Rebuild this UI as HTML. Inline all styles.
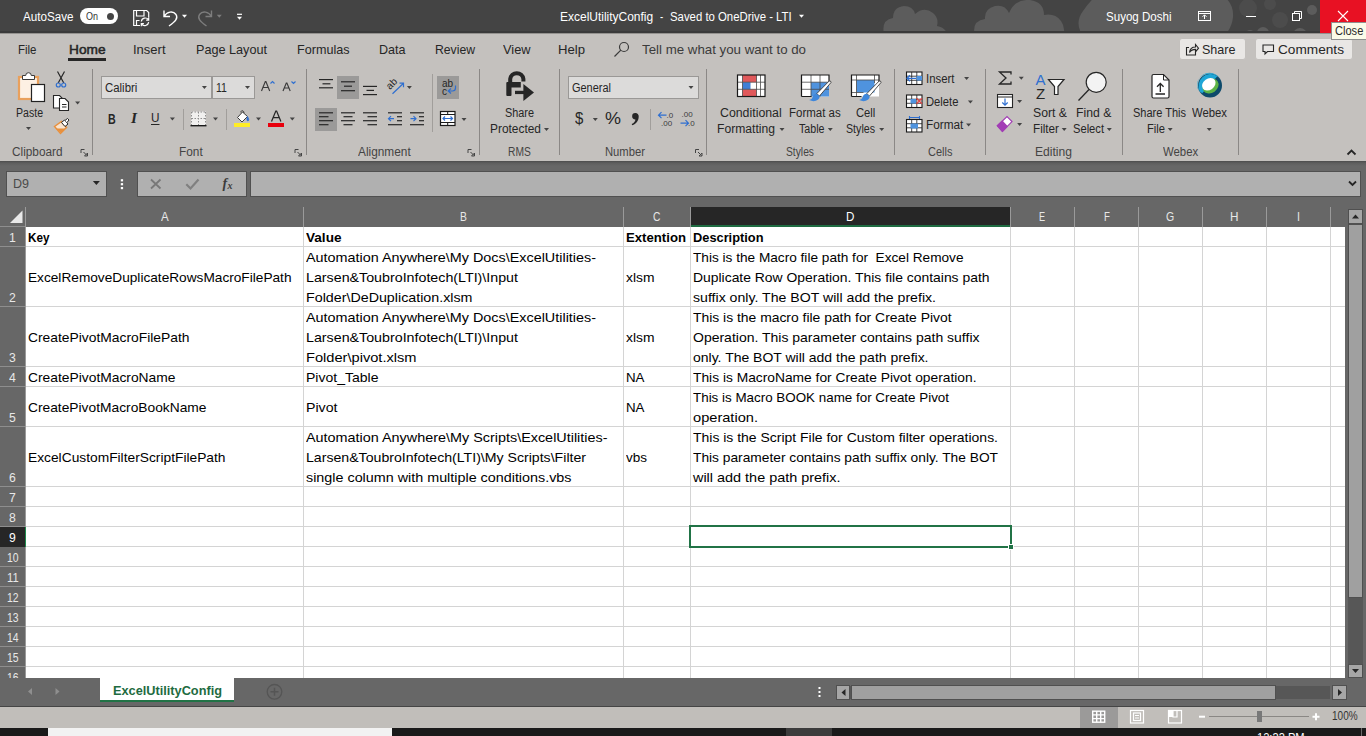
<!DOCTYPE html>
<html lang="en"><head><meta charset="utf-8"><title>ExcelUtilityConfig - Excel</title>
<style>

*{box-sizing:border-box;margin:0;padding:0}
html,body{width:1366px;height:736px;overflow:hidden;background:#c4c1be}
body{font-family:"Liberation Sans",sans-serif;font-size:12px;color:#262626}
#app{position:relative;width:1366px;height:736px;overflow:hidden;background:#c4c1be}
.b{position:absolute}
.t{z-index:3;position:absolute;white-space:pre;transform-origin:0 50%;display:block}
svg.ic{z-index:3;position:absolute;left:0;top:0;width:1366px;height:736px;overflow:hidden}
.titlebar{left:0;top:0;width:1366px;height:33px;background:#444444;border-bottom:2px solid #3a3a3a}
.tabrow{left:0;top:33px;width:1366px;height:33px;background:#c4c1be;border-top:1px solid #94928f}
.ribbon{left:0;top:66px;width:1366px;height:95px;background:#c4c1be}
.band{left:0;top:161px;width:1366px;height:46px;background:linear-gradient(#4c4c4c,#5e5e5e 2px,#676767 5px)}
.box{background:#b0b0b0;border:1px solid #505050}
.grid{left:0;top:207px;width:1345px;height:471px;background:#fff;overflow:hidden}
.gridwrap{left:0;top:207px;width:1366px;height:471px;background:#676767}
.colhdr{left:0;top:0;width:1345px;height:20px;background:#676767}
.rowhdr{left:0;top:20px;width:26px;height:451px;background:#676767;border-right:1px solid #9a9a9a}
.hl{position:absolute;left:26px;width:1320px;height:1px;background:#d4d4d4}
.vl{position:absolute;top:20px;width:1px;height:451px;background:#d4d4d4}
.rh{position:absolute;left:0;width:25px;height:1px;background:#8e8e8e}
.ch{position:absolute;top:0;width:1px;height:20px;background:#9a9a9a}
.sheetbar{left:0;top:678px;width:1366px;height:29px;background:#676767;border-bottom:1px solid #454545;z-index:2}
.status{left:0;top:707px;width:1366px;height:21px;background:#c1beba;z-index:2}
.taskbar{z-index:2;left:0;top:728px;width:1366px;height:8px;background:#1a1a1a;overflow:hidden}
.t.rn{z-index:1}
.t.sf{font-family:"Liberation Serif",serif}
.t.sb{-webkit-text-stroke:0.5px #262626}

</style></head>
<body>
<div id="app">
<div class="b titlebar"></div>
<div class="b" style="left:80px;top:8px;width:38px;height:16px;background:#fff;border-radius:8px"></div>
<div class="b" style="left:106.5px;top:12.5px;width:7px;height:7px;background:#444;border-radius:50%"></div>
<div class="b" style="left:1320px;top:0px;width:46px;height:33px;background:#e81123"></div>
<div class="b tabrow"></div>
<div class="b ribbon"></div>
<div class="b" style="left:68px;top:58px;width:38px;height:3px;background:#262626"></div>
<div class="b" style="left:1179px;top:38px;width:67px;height:22px;background:#e9e7e5;border:1px solid #c3c0bd;border-radius:3px"></div>
<div class="b" style="left:1255px;top:38px;width:98px;height:22px;background:#e9e7e5;border:1px solid #c3c0bd;border-radius:3px"></div>
<div class="b" style="left:1331px;top:22px;width:40px;height:18px;background:#fbfbe9;border:1px solid #8f8f8f"></div>
<div class="b" style="left:92px;top:69px;width:1px;height:86px;background:#8b8886"></div>
<div class="b" style="left:306px;top:69px;width:1px;height:86px;background:#8b8886"></div>
<div class="b" style="left:479px;top:69px;width:1px;height:86px;background:#8b8886"></div>
<div class="b" style="left:559px;top:69px;width:1px;height:86px;background:#8b8886"></div>
<div class="b" style="left:706px;top:69px;width:1px;height:86px;background:#8b8886"></div>
<div class="b" style="left:894px;top:69px;width:1px;height:86px;background:#8b8886"></div>
<div class="b" style="left:985px;top:69px;width:1px;height:86px;background:#8b8886"></div>
<div class="b" style="left:1122px;top:69px;width:1px;height:86px;background:#8b8886"></div>
<div class="b" style="left:1238px;top:69px;width:1px;height:86px;background:#8b8886"></div>
<div class="b" style="left:183px;top:109px;width:1px;height:21px;background:#a19e9b"></div>
<div class="b" style="left:226px;top:109px;width:1px;height:21px;background:#a19e9b"></div>
<div class="b" style="left:650px;top:109px;width:1px;height:21px;background:#a19e9b"></div>
<div class="b" style="left:432px;top:74px;width:1px;height:58px;background:#a19e9b"></div>
<div class="b" style="left:101px;top:76px;width:111px;height:23px;background:#dcdbda;border:1px solid #9a9896"></div>
<div class="b" style="left:212px;top:76px;width:43px;height:23px;background:#dcdbda;border:1px solid #9a9896"></div>
<div class="b" style="left:568px;top:76px;width:131px;height:23px;background:#dcdbda;border:1px solid #9a9896"></div>
<div class="b" style="left:337px;top:76px;width:22px;height:23px;background:#9b9a99"></div>
<div class="b" style="left:437px;top:76px;width:22px;height:23px;background:#9b9a99"></div>
<div class="b" style="left:315px;top:108px;width:22px;height:23px;background:#9b9a99"></div>
<div class="b" style="left:234px;top:123px;width:16px;height:4px;background:#ffed26"></div>
<div class="b" style="left:268px;top:123px;width:16px;height:4px;background:#e8000c"></div>
<div class="b band"></div>
<div class="b box" style="left:6px;top:171px;width:101px;height:26px;"></div>
<div class="b box" style="left:137px;top:171px;width:110px;height:26px;"></div>
<div class="b box" style="left:250px;top:171px;width:1111px;height:26px;"></div>
<div class="b gridwrap"></div><div class="b grid"><div class="b colhdr"></div><div class="b rowhdr"></div><div class="hl" style="top:39px"></div><div class="rh" style="top:39px"></div><div class="hl" style="top:99px"></div><div class="rh" style="top:99px"></div><div class="hl" style="top:159px"></div><div class="rh" style="top:159px"></div><div class="hl" style="top:179px"></div><div class="rh" style="top:179px"></div><div class="hl" style="top:219px"></div><div class="rh" style="top:219px"></div><div class="hl" style="top:279px"></div><div class="rh" style="top:279px"></div><div class="hl" style="top:299px"></div><div class="rh" style="top:299px"></div><div class="hl" style="top:319px"></div><div class="rh" style="top:319px"></div><div class="hl" style="top:339px"></div><div class="rh" style="top:339px"></div><div class="hl" style="top:359px"></div><div class="rh" style="top:359px"></div><div class="hl" style="top:379px"></div><div class="rh" style="top:379px"></div><div class="hl" style="top:399px"></div><div class="rh" style="top:399px"></div><div class="hl" style="top:419px"></div><div class="rh" style="top:419px"></div><div class="hl" style="top:439px"></div><div class="rh" style="top:439px"></div><div class="hl" style="top:459px"></div><div class="rh" style="top:459px"></div><div class="hl" style="top:479px"></div><div class="rh" style="top:479px"></div><div class="vl" style="left:303px"></div><div class="ch" style="left:303px"></div><div class="vl" style="left:623px"></div><div class="ch" style="left:623px"></div><div class="vl" style="left:690px"></div><div class="ch" style="left:690px"></div><div class="vl" style="left:1010px"></div><div class="ch" style="left:1010px"></div><div class="vl" style="left:1074px"></div><div class="ch" style="left:1074px"></div><div class="vl" style="left:1138px"></div><div class="ch" style="left:1138px"></div><div class="vl" style="left:1202px"></div><div class="ch" style="left:1202px"></div><div class="vl" style="left:1266px"></div><div class="ch" style="left:1266px"></div><div class="vl" style="left:1330px"></div><div class="ch" style="left:1330px"></div><div class="ch" style="left:25px"></div><div class="rh" style="top:19px"></div><div class="b" style="left:691px;top:0;width:319px;height:20px;background:#262626;border-bottom:2px solid #1e6b41"></div><div class="b" style="left:0;top:320px;width:26px;height:20px;background:#262626;border-right:1px solid #1e8a4c"></div><div class="b" style="left:689px;top:318px;width:323px;height:23px;border:2px solid #217346"></div><div class="b" style="left:1008px;top:337px;width:6px;height:6px;background:#217346;border:1px solid #fff"></div></div>
<div class="b" style="left:1348px;top:209px;width:15px;height:469px;background:#575757"></div>
<div class="b" style="left:1348px;top:209px;width:15px;height:15px;background:#a6a6a6;border:1px solid #505050"></div>
<div class="b" style="left:1348px;top:224px;width:15px;height:374px;background:#a0a0a0;border:1px solid #505050"></div>
<div class="b" style="left:1348px;top:664px;width:15px;height:14px;background:#a6a6a6;border:1px solid #505050"></div>
<div class="b sheetbar"></div>
<div class="b" style="left:100px;top:678px;width:134px;height:24px;background:#ffffff;border-bottom:2px solid #217346;z-index:2"></div>
<div class="b" style="left:836px;top:686px;width:494px;height:13px;background:#575757;z-index:2"></div>
<div class="b" style="left:836px;top:685px;width:14px;height:15px;background:#a6a6a6;border:1px solid #505050;z-index:2"></div>
<div class="b" style="left:851px;top:685px;width:425px;height:15px;background:#a0a0a0;border:1px solid #505050;z-index:2"></div>
<div class="b" style="left:1332px;top:685px;width:15px;height:15px;background:#a6a6a6;border:1px solid #505050;z-index:2"></div>
<div class="b status"></div>
<div class="b" style="left:1080px;top:707px;width:38px;height:21px;background:#9b9a99;z-index:2"></div>
<div class="b" style="left:1209px;top:716px;width:100px;height:1px;background:#8a8784;z-index:2"></div>
<div class="b" style="left:1257px;top:711px;width:5px;height:11px;background:#787878;z-index:2"></div>
<div class="b taskbar"><div class="b" style="left:48px;top:0;width:344px;height:9px;background:#f2f2f2"></div><div class="b" style="left:786px;top:0;width:46px;height:9px;background:#3c3c3c"></div></div>
<svg class="ic" width="1366" height="736" viewBox="0 0 1366 736">
<clipPath id="tb"><rect x="0" y="0" width="1366" height="31"/></clipPath>
<g clip-path="url(#tb)"><g fill="#5c5c5c"><path d="M884 34q-3-14 9-16q0-11 11-12q9 0 11 8q9-8 18-1q6 5 4 13q10 2 11 11v6h-64z"/><path d="M975 36q-4-15 10-17q-1-10 10-13q10-2 14 7q6-14 21-13q14 2 14 15q11-2 17 6q5 7 2 15z"/><path d="M1083 36q-9-13 0-25q6-9 14-16h125q12 8 11 22q-1 11-9 19z"/><circle cx="1263" cy="33" r="6"/><circle cx="1250" cy="34" r="4"/><circle cx="1300" cy="35" r="7"/><circle cx="1312" cy="10" r="5"/></g><g fill="#4c4c4c"><circle cx="1248" cy="8" r="9"/><circle cx="1280" cy="20" r="8"/><circle cx="1270" cy="4" r="6"/></g></g>
<g fill="none" stroke="#fff" stroke-width="1.2"><path d="M140 25.5h-6.3v-15h13l2 2v5"/><path d="M136.5 10.5v5.5h7.5v-5.5"/><path d="M136.5 25.5v-5h3"/><path d="M141.3 21.5a4 4 0 0 1 7.2-1.8M148.7 17.5v2.6h-2.6M148.7 22.2a4 4 0 0 1-7.2 1.8M141.3 26.2v-2.6h2.6"/></g>
<g fill="none" stroke-width="1.4"><path d="M164 10.5v6h6M164 16.5c3-5 9-6 12-2c2.5 4-1 7-7 11.500" stroke="#fff"/><path d="M211.500 10.5v6h-6M211.500 16.5c-3-5-9-6-12-2c-2.5 4 1 7 7 11.500" stroke="#7d7d7d"/></g>
<path d="M182.0 14.8h5.0l-2.5 3.0z" fill="#fff"/>
<path d="M216.8 14.8h5.0l-2.5 3.0z" fill="#7d7d7d"/>
<path d="M237 14.3h5" stroke="#fff" stroke-width="1.2"/>
<path d="M237.0 16.8h5.0l-2.5 3.0z" fill="#fff"/>
<path d="M799.0 14.8h5.0l-2.5 3.0z" fill="#fff"/>
<g fill="none" stroke="#fff" stroke-width="1"><rect x="1198.500" y="11.500" width="12" height="9"/><path d="M1198.500 13.500h12M1204.500 19v-4M1202.500 16.800l2-2l2 2"/></g>
<path d="M1246 16.500h10" stroke="#fff" stroke-width="1"/>
<g fill="none" stroke="#fff" stroke-width="1"><rect x="1292.500" y="13.500" width="7" height="7"/><path d="M1294.500 13.500v-2h7v7h-2"/></g>
<path d="M1338 11l10 10M1348 11l-10 10" stroke="#fff" stroke-width="1.1"/>
<g fill="none" stroke="#3b3b3b" stroke-width="1.2"><circle cx="624" cy="47" r="4.500"/><path d="M620.800 50.200L614.500 56.500"/></g>
<g fill="none" stroke="#262626" stroke-width="1.1"><path d="M1189 47.500h-2.500v7.500h9v-3"/><path d="M1189.500 52.500c0.500-4 3-5.500 6-5.500v-2.500l3 3.700l-3 3.700v-2.500c-3 0-4.500 0.800-6 3.100z"/></g>
<path d="M1263 45h10.500v6.500h-6l-2.500 2.500v-2.500h-2z" fill="none" stroke="#262626" stroke-width="1.1"/>
<rect x="19" y="77" width="19" height="22" fill="#fdf0e3" stroke="#e9a05c" stroke-width="2.200"/>
<path d="M22.500 79.500v-4h3.200a2.800 2.800 0 0 1 5.600 0h3.200v4z" fill="#fff" stroke="#3a3a3a" stroke-width="1"/>
<rect x="31.500" y="84.500" width="13" height="17" fill="#fff" stroke="#222" stroke-width="1.200"/>
<path d="M26.0 127.0h5.0l-2.5 3.0z" fill="#444"/>
<g fill="none" stroke-width="1.2"><path d="M57.500 71.500l6.300 11.500M64.500 71.500l-6.300 11.500" stroke="#262626"/><circle cx="58.300" cy="85" r="2" stroke="#2f6fd0"/><circle cx="63.700" cy="85" r="2" stroke="#2f6fd0"/></g>
<g fill="#fff" stroke="#262626" stroke-width="1.1"><path d="M53.500 95.500h6l2.500 2.500v10h-8.500z"/><path d="M59.500 98.500h5.500l3.500 3.500v8.500h-9z"/><path d="M62 104.500h4.500M62 107h4.500" fill="none"/></g>
<path d="M75.1 101.5h5.0l-2.5 3.0z" fill="#444"/>
<g stroke-width="1"><path d="M54.500 126.500l7-5l5 6l-6 6z" fill="#f9e4cf" stroke="#e8903d" stroke-width="1.5"/><path d="M56 128.500l5 4.500l4.500-4.500z" fill="#e8903d" stroke="none"/><path d="M61.500 122.500l3-2.500l3.500 4l-3 2.500z" fill="#fff" stroke="#262626"/><path d="M65 120.500l2.500-2l1.500 1.500l-2 2.500" fill="#fff" stroke="#262626"/></g>
<path d="M81 153.0v-3.5h3.5M83.5 152.0l3.5 3.5M87.5 153.0v3h-3z" fill="none" stroke="#444" stroke-width="1"/>
<path d="M201.9 86.0h5.0l-2.5 3.0z" fill="#444"/>
<path d="M245.0 86.0h5.0l-2.5 3.0z" fill="#444"/>
<g fill="none" stroke="#3b3b3b" stroke-width="1.150"><path d="M261.500 91l3.800-9.500h0.600l3.800 9.500M263 87.500h5.200"/><path d="M283 91l3.300-8h0.600l3.300 8M284.300 88h4.500"/></g>
<g fill="none" stroke="#2f6fd0" stroke-width="1.1"><path d="M270.500 83.500l2-2l2 2"/><path d="M291.500 81.500l2 2l2-2"/></g>
<path d="M151 124.500h8.500" stroke="#262626" stroke-width="1"/>
<path d="M169.9 117.5h5.0l-2.5 3.0z" fill="#444"/>
<g><rect x="191" y="111.500" width="15" height="14" fill="#f1f0ef"/><path d="M191.500 112v13M205.500 112v13M191.500 112h14M198.500 112v13M191.500 118.500h14" fill="none" stroke="#8e8e8e" stroke-width="1" stroke-dasharray="1.5 1.5"/><path d="M190.500 125.700h16" stroke="#1a1a1a" stroke-width="1.400"/></g>
<path d="M213.0 117.5h5.0l-2.5 3.0z" fill="#444"/>
<g stroke-width="1"><path d="M237.500 117.500l5-5.500l5 4.500l-5.500 5.500z" fill="#fff" stroke="#3b3b3b"/><path d="M241 112.500c-0.500-2.500 3-2.500 3 0.500" fill="none" stroke="#3b3b3b"/><path d="M247.500 116.500c2 2.500 1.300 4.500 0.400 4.500c-1.200 0-1.500-2-0.400-4.500z" fill="#2f6fd0" stroke="#2f6fd0" stroke-width="0.6"/></g>
<path d="M256.0 117.5h5.0l-2.5 3.0z" fill="#444"/>
<path d="M271.500 121.500l4.300-10.500h0.800l4.300 10.500M273.200 117.700h6" fill="none" stroke="#262626" stroke-width="1.250"/>
<path d="M289.8 117.5h5.0l-2.5 3.0z" fill="#444"/>
<path d="M295 153.0v-3.5h3.5M297.5 152.0l3.5 3.5M301.5 153.0v3h-3z" fill="none" stroke="#444" stroke-width="1"/>
<path d="M319 79.6H333" stroke="#262626" stroke-width="1.2"/>
<path d="M319 87.8H333" stroke="#262626" stroke-width="1.2"/>
<path d="M322.5 83.8H330.4" stroke="#262626" stroke-width="1.2"/>
<path d="M341 81.8H355" stroke="#262626" stroke-width="1.2"/>
<path d="M341 90.7H355" stroke="#262626" stroke-width="1.2"/>
<path d="M344 86.2H352" stroke="#262626" stroke-width="1.2"/>
<path d="M363 86.4H377" stroke="#262626" stroke-width="1.2"/>
<path d="M363 94.6H377" stroke="#262626" stroke-width="1.2"/>
<path d="M366.5 90.4H374" stroke="#262626" stroke-width="1.2"/>
<text x="0" y="0" transform="translate(390 90) rotate(-45)" font-family="Liberation Sans, sans-serif" font-size="10" fill="#262626">ab</text>
<path d="M392.500 93.700l10.500-10M399.500 83.200h4v4" fill="none" stroke="#2f6fd0" stroke-width="1.2"/>
<path d="M406.9 86.0h5.0l-2.5 3.0z" fill="#444"/>
<text x="442" y="86.500" font-family="Liberation Sans, sans-serif" font-size="10" fill="#262626">ab</text><text x="442" y="94.500" font-family="Liberation Sans, sans-serif" font-size="10" fill="#262626">c</text>
<path d="M455.500 85.500v2.500q0 3-3 3h-4M451 88.500l-2.800 2.500l2.800 2.500" fill="none" stroke="#2f6fd0" stroke-width="1.2"/>
<path d="M319 112.8H333" stroke="#262626" stroke-width="1.2"/>
<path d="M319 120.7H333" stroke="#262626" stroke-width="1.2"/>
<path d="M319 116.7H328.5" stroke="#262626" stroke-width="1.2"/>
<path d="M319 124.7H328.5" stroke="#262626" stroke-width="1.2"/>
<path d="M341 112.8H355" stroke="#262626" stroke-width="1.2"/>
<path d="M341 120.7H355" stroke="#262626" stroke-width="1.2"/>
<path d="M343.5 116.7H352.5" stroke="#262626" stroke-width="1.2"/>
<path d="M343.5 124.7H352.5" stroke="#262626" stroke-width="1.2"/>
<path d="M363 112.8H377" stroke="#262626" stroke-width="1.2"/>
<path d="M363 120.7H377" stroke="#262626" stroke-width="1.2"/>
<path d="M367.5 116.7H377" stroke="#262626" stroke-width="1.2"/>
<path d="M367.5 124.7H377" stroke="#262626" stroke-width="1.2"/>
<path d="M388 112.8H402" stroke="#262626" stroke-width="1.2"/>
<path d="M388 124.7H402" stroke="#262626" stroke-width="1.2"/>
<path d="M397 116.7H402" stroke="#262626" stroke-width="1.2"/>
<path d="M397 120.7H402" stroke="#262626" stroke-width="1.2"/>
<path d="M394 118.700h-5.500M391 116.200l-2.500 2.500l2.500 2.500" fill="none" stroke="#2f6fd0" stroke-width="1.2"/>
<path d="M410 112.8H424" stroke="#262626" stroke-width="1.2"/>
<path d="M410 124.7H424" stroke="#262626" stroke-width="1.2"/>
<path d="M419 116.7H424" stroke="#262626" stroke-width="1.2"/>
<path d="M419 120.7H424" stroke="#262626" stroke-width="1.2"/>
<path d="M410.500 118.700h5.500M413.500 116.200l2.500 2.500l-2.500 2.500" fill="none" stroke="#2f6fd0" stroke-width="1.2"/>
<g><rect x="440.500" y="111.500" width="14.500" height="14" fill="#fff" stroke="#1a1a1a" stroke-width="1.2"/><path d="M440.500 114.500h14.500M440.500 122.500h14.500M447.700 111.500v3M447.700 122.500v3" stroke="#1a1a1a" stroke-width="1"/><path d="M443 118.500h9.500M445 116.500l-2 2l2 2M450.500 116.500l2 2l-2 2" fill="none" stroke="#2f6fd0" stroke-width="1.2"/></g>
<path d="M461.5 118.0h5.0l-2.5 3.0z" fill="#444"/>
<path d="M468 153.0v-3.5h3.5M470.5 152.0l3.5 3.5M474.5 153.0v3h-3z" fill="none" stroke="#444" stroke-width="1"/>
<g fill="#262626"><path d="M510.200 83V79A6.650 6.650 0 0 1 523.400 79V81.500" fill="none" stroke="#262626" stroke-width="4"/><path d="M506.300 83q0-1 1-1H520.800V87.400H511.500V95q0 0.900-1 0.900H507.300q-1 0-1-0.900z"/><rect x="515" y="90.800" width="9.500" height="3.300"/><path d="M523.400 84L534 92.500L523.400 101.100z"/></g>
<path d="M544.0 128.0h5.0l-2.5 3.0z" fill="#444"/>
<path d="M688.5 86.0h5.0l-2.5 3.0z" fill="#444"/>
<path d="M592.8 118.0h5.0l-2.5 3.0z" fill="#444"/>
<path d="M635.300 113a3.200 3.200 0 0 1 3.400 3.500c0 4-2.500 7.500-6.500 8.800l-0.500-1.300c2.300-1 3.700-2.800 3.700-4.600a3.200 3.200 0 0 1-0.100-6.400z" fill="#262626"/>
<g font-family="Liberation Sans, sans-serif" font-size="8" fill="#3b3b3b"><text x="666.500" y="117.500">.0</text><text x="661" y="126">.00</text><text x="681.500" y="117">.00</text><text x="688" y="126">.0</text></g>
<g fill="none" stroke="#2f6fd0" stroke-width="1.200"><path d="M666.500 115.200h-8M661.500 112.200l-3 3l3 3"/><path d="M680.500 123.200h8M685.500 120.200l3 3l-3 3"/></g>
<path d="M695.5 153.0v-3.5h3.5M698.0 152.0l3.5 3.5M702.0 153.0v3h-3z" fill="none" stroke="#444" stroke-width="1"/>
<g><rect x="737.500" y="75" width="27.500" height="21.500" fill="#fff"/><rect x="742.500" y="75" width="14" height="7.200" fill="#e0595b"/><rect x="742.500" y="89.300" width="14" height="7.200" fill="#e0595b"/><rect x="742.500" y="82.200" width="8" height="7.100" fill="#3f7fd6"/><path d="M737.500 82.200h27.500M737.500 89.300h27.500M742.500 75v21.500M756.500 75v21.500M760.500 75v21.500" stroke="#4a4a4a" stroke-width="0.8" fill="none"/><rect x="737.500" y="75" width="27.500" height="21.500" fill="none" stroke="#1a1a1a" stroke-width="1.2"/></g>
<path d="M779.5 128.0h5.0l-2.5 3.0z" fill="#444"/>
<g><rect x="801.500" y="75" width="27.500" height="21.500" fill="#fff"/><rect x="811" y="82.200" width="18" height="14.300" fill="#4f93de"/><path d="M801.500 82.200h27.500M801.500 89.300h27.500M811 75v21.500M820 75v21.500" stroke="#4a4a4a" stroke-width="0.8" fill="none"/><path d="M801.500 96.500v-21.500h27.500v8M801.500 96.500h10" fill="none" stroke="#1a1a1a" stroke-width="1.2"/></g>
<g><path d="M831 82.5l-11.500 13.500l-2.800-2.300l12.500-12.700q1.800-0.500 1.800 1.500z" fill="#fff" stroke="#3b3b3b" stroke-width="0.9"/><path d="M819.5 96.0l-2.800-2.300q-3.500 0.300-4 3.300q-0.500 2.500-3.500 3q5 2.500 9-0.500q1.800-1.500 1.300-3.500z" fill="#3f87db"/></g>
<path d="M827.8 128.0h5.0l-2.5 3.0z" fill="#444"/>
<g><rect x="851.500" y="75" width="27.500" height="21.500" fill="#fff"/><rect x="856.500" y="80" width="18" height="12.500" fill="#4f93de"/><path d="M851.500 80h27.500M851.500 92.500h12M856.500 75v21.500M874.500 75v8" stroke="#4a4a4a" stroke-width="0.8" fill="none"/><path d="M851.500 96.500v-21.500h27.500v8M851.500 96.500h10" fill="none" stroke="#1a1a1a" stroke-width="1.2"/></g>
<g><path d="M881 82.5l-11.500 13.500l-2.800-2.300l12.500-12.700q1.800-0.500 1.800 1.500z" fill="#fff" stroke="#3b3b3b" stroke-width="0.9"/><path d="M869.5 96.0l-2.800-2.300q-3.500 0.300-4 3.300q-0.500 2.500-3.500 3q5 2.500 9-0.500q1.800-1.500 1.300-3.500z" fill="#3f87db"/></g>
<path d="M879.2 128.0h5.0l-2.5 3.0z" fill="#444"/>
<rect x="906.5" y="72" width="15.5" height="12.5" fill="#fff" stroke="#1a1a1a" stroke-width="1.1"/><path d="M906.5 76.2h15.5M906.5 80.3h15.5M911.7 72v12.5M916.8 72v12.5" stroke="#1a1a1a" stroke-width="0.8"/>
<rect x="916.500" y="76" width="5.500" height="4.500" fill="#4f93de"/><path d="M916 78.300h-9M910 75.300l-3 3l3 3" fill="none" stroke="#2f6fd0" stroke-width="1.300"/>
<path d="M964.1 77.0h5.0l-2.5 3.0z" fill="#444"/>
<rect x="906.5" y="95" width="15.5" height="12.5" fill="#fff" stroke="#1a1a1a" stroke-width="1.1"/><path d="M906.5 99.2h15.5M906.5 103.3h15.5M911.7 95v12.5M916.8 95v12.5" stroke="#1a1a1a" stroke-width="0.8"/>
<rect x="910.500" y="99" width="5.500" height="4.500" fill="#4f93de"/><path d="M916.500 98.300l5.500 5.500M922 98.300l-5.500 5.500" stroke="#e0484a" stroke-width="1.400"/>
<path d="M967.9 100.5h5.0l-2.5 3.0z" fill="#444"/>
<rect x="906.5" y="119.5" width="15.5" height="12.5" fill="#fff" stroke="#1a1a1a" stroke-width="1.1"/><path d="M906.5 123.7h15.5M906.5 127.8h15.5M911.7 119.5v12.5M916.8 119.5v12.5" stroke="#1a1a1a" stroke-width="0.8"/>
<rect x="910.500" y="123.500" width="7.500" height="5" fill="#4f93de"/><path d="M909.500 117.500h10M909.500 116v3M919.500 116v3" stroke="#2f6fd0" stroke-width="1.100" fill="none"/>
<path d="M966.1 123.5h5.0l-2.5 3.0z" fill="#444"/>
<path d="M1011 74.500v-2.500h-11.500l6.500 6l-6.500 6h11.500v-2.500" fill="none" stroke="#262626" stroke-width="1.300"/>
<path d="M1018.8 76.8h5.0l-2.5 3.0z" fill="#444"/>
<rect x="997.500" y="94.500" width="15" height="13" fill="#fff" stroke="#262626" stroke-width="1.100"/><path d="M997.500 97h15" stroke="#262626" stroke-width="1"/><path d="M1005 98.500v6.500M1002.300 102.500l2.700 2.700l2.700-2.700" fill="none" stroke="#2f6fd0" stroke-width="1.200"/>
<path d="M1017.1 100.0h5.0l-2.5 3.0z" fill="#444"/>
<g><path d="M997.400 125.800L1007 116.500L1012 121.600L1002.400 131.300z" fill="#fff" stroke="#a23db5" stroke-width="1.200"/><path d="M997.400 125.800L1002.200 121.100L1007.200 126.400L1002.400 131.300z" fill="#a23db5" stroke="#a23db5" stroke-width="1.200"/></g>
<path d="M1017.1 123.0h5.0l-2.5 3.0z" fill="#444"/>
<text x="1035.500" y="84.500" font-family="Liberation Sans, sans-serif" font-size="15" fill="#2f6fd0">A</text><text x="1036" y="98.800" font-family="Liberation Sans, sans-serif" font-size="15" fill="#262626">Z</text>
<path d="M1048.500 79.500h15.500l-6 7v8h-3.500v-8z" fill="#fff" stroke="#262626" stroke-width="1.200"/>
<path d="M1061.7 128.0h5.0l-2.5 3.0z" fill="#444"/>
<circle cx="1096.200" cy="82.300" r="10" fill="#f3f3f3" stroke="#262626" stroke-width="1.200"/><path d="M1089 89.500l-10.500 11" stroke="#262626" stroke-width="1.300"/>
<path d="M1106.8 128.0h5.0l-2.5 3.0z" fill="#444"/>
<path d="M1153.500 74.500h10l5.500 5.500v16.500q0 1.500-1.500 1.500h-14q-1.500 0-1.500-1.500v-20.500q0-1.500 1.500-1.500z" fill="#fff" stroke="#262626" stroke-width="1.200"/><path d="M1163.500 74.500v5.500h5.500" fill="none" stroke="#262626" stroke-width="1"/><path d="M1160.300 92v-8M1157 86.800l3.300-3.300l3.300 3.300M1155.500 94h9.500" fill="none" stroke="#262626" stroke-width="1.300"/>
<path d="M1167.7 128.0h5.0l-2.5 3.0z" fill="#444"/>
<g><circle cx="1210" cy="85.600" r="12" fill="#0d4a6b"/><path d="M1199.600 91.600a12 12 0 0 1 20-13.500a10 9 0 0 0-20 13.500z" fill="#1fa6d6"/><path d="M1199.800 91.500a12 12 0 0 1 17.500-15.300l-15 17z" fill="#1fa6d6"/><ellipse cx="1210.500" cy="86" rx="8.500" ry="7" transform="rotate(-35 1210.500 86)" fill="#5db446"/><ellipse cx="1208.800" cy="84.300" rx="7.300" ry="5.600" transform="rotate(-35 1208.800 84.300)" fill="#fff"/></g>
<path d="M1206.7 128.0h5.0l-2.5 3.0z" fill="#444"/>
<path d="M1347.500 154.500l4-4l4 4" fill="none" stroke="#262626" stroke-width="1.800"/>
<path d="M92.9 181.0h7l-3.5 4z" fill="#262626"/>
<g fill="#fff"><rect x="120.800" y="179.200" width="2.300" height="2.200"/><rect x="120.800" y="183.100" width="2.300" height="2.200"/><rect x="120.800" y="187" width="2.300" height="2.200"/></g>
<path d="M151 179.500l9.500 9M160.500 179.500l-9.500 9" stroke="#787878" stroke-width="1.800"/>
<path d="M186.300 184.300l4.200 4.200l8-9" fill="none" stroke="#808080" stroke-width="2.200"/>
<text x="222.500" y="188" font-family="Liberation Serif, serif" font-style="italic" font-weight="700" font-size="14" fill="#3b3b3b">f</text><text x="227.500" y="188.500" font-family="Liberation Serif, serif" font-style="italic" font-weight="700" font-size="10" fill="#3b3b3b">x</text>
<path d="M1349 181.500l3.500 3.500l3.500-3.500" fill="none" stroke="#262626" stroke-width="1.800"/>
<path d="M22.500 210.500v12.500h-12.500z" fill="#e9e9e9"/>
<path d="M1352 218.500h7l-3.500-4z" fill="#262626"/><path d="M1352 669h7l-3.500 4z" fill="#262626"/>
<path d="M32 688v7l-4-3.500z" fill="#8f8f8f"/><path d="M55.500 688v7l4-3.500z" fill="#8f8f8f"/>
<circle cx="274.500" cy="691.800" r="7.300" fill="none" stroke="#555" stroke-width="1.300"/><path d="M270.500 691.800h8M274.500 687.800v8" stroke="#555" stroke-width="1.500"/>
<g fill="#fff"><rect x="818.500" y="687" width="2" height="2"/><rect x="818.500" y="691" width="2" height="2"/><rect x="818.500" y="695" width="2" height="2"/></g>
<path d="M845.500 689v7l-4-3.500z" fill="#262626"/><path d="M1338 689v7l4-3.500z" fill="#262626"/>
<g fill="none" stroke="#fff" stroke-width="1.400"><rect x="1092.700" y="711.200" width="12" height="11"/><path d="M1092.700 714.900h12M1092.700 718.600h12M1096.700 711.200v11M1100.700 711.200v11"/></g>
<g fill="none" stroke="#fff" stroke-width="1.200"><rect x="1130.500" y="710.500" width="13" height="12.500"/><rect x="1133.500" y="713" width="7" height="7.500"/><path d="M1135 715.500h4M1135 718h4"/></g>
<g fill="none" stroke="#fff" stroke-width="1.200"><rect x="1168.500" y="710.500" width="13" height="12.500"/><path d="M1173 710.500v6.500h4v-6.500"/></g><rect x="1168.500" y="710.500" width="4.500" height="6.500" fill="#fff"/>
<path d="M1199 716.700h6" stroke="#fff" stroke-width="2"/><path d="M1312.500 716.700h7M1316 713.200v7" stroke="#fff" stroke-width="2"/>
<path d="M1361.500 728v8" stroke="#6a6a6a" stroke-width="1"/>
</svg>
<div class="texts">
<span class="t " style="left:23px;top:8.5px;font-size:12px;line-height:17px;color:#ffffff;transform:scaleX(0.9703);">AutoSave</span>
<span class="t " style="left:86px;top:9.5px;font-size:10px;line-height:14px;color:#333333;transform:scaleX(0.8993);">On</span>
<span class="t " style="left:560.4px;top:8.5px;font-size:12px;line-height:17px;color:#ffffff;transform:scaleX(0.9981);">ExcelUtilityConfig</span>
<span class="t " style="left:660.2px;top:8.5px;font-size:12px;line-height:17px;color:#ffffff;transform:scaleX(0.8000);">-</span>
<span class="t " style="left:669.8px;top:8.5px;font-size:12px;line-height:17px;color:#ffffff;transform:scaleX(0.9471);">Saved to OneDrive - LTI</span>
<span class="t " style="left:1106px;top:8.5px;font-size:12px;line-height:17px;color:#ffffff;transform:scaleX(0.9626);">Suyog Doshi</span>
<span class="t " style="left:1334.7px;top:22.5px;font-size:12px;line-height:17px;color:#2b2b2b;transform:scaleX(0.9222);">Close</span>
<span class="t " style="left:17.5px;top:41.0px;font-size:13px;line-height:18px;color:#262626;transform:scaleX(0.8829);">File</span>
<span class="t sb" style="left:68.5px;top:41.0px;font-size:13px;line-height:18px;color:#262626;transform:scaleX(1.0523);">Home</span>
<span class="t " style="left:132.5px;top:41.0px;font-size:13px;line-height:18px;color:#262626;transform:scaleX(0.9995);">Insert</span>
<span class="t " style="left:196px;top:41.0px;font-size:13px;line-height:18px;color:#262626;transform:scaleX(0.9724);">Page Layout</span>
<span class="t " style="left:297px;top:41.0px;font-size:13px;line-height:18px;color:#262626;transform:scaleX(0.9689);">Formulas</span>
<span class="t " style="left:379px;top:41.0px;font-size:13px;line-height:18px;color:#262626;transform:scaleX(0.9647);">Data</span>
<span class="t " style="left:435px;top:41.0px;font-size:13px;line-height:18px;color:#262626;transform:scaleX(0.9384);">Review</span>
<span class="t " style="left:502.5px;top:41.0px;font-size:13px;line-height:18px;color:#262626;transform:scaleX(0.9838);">View</span>
<span class="t " style="left:557.5px;top:41.0px;font-size:13px;line-height:18px;color:#262626;transform:scaleX(1.0093);">Help</span>
<span class="t " style="left:641.5px;top:41.0px;font-size:13px;line-height:18px;color:#3b3b3b;transform:scaleX(1.0223);">Tell me what you want to do</span>
<span class="t " style="left:1202px;top:40.5px;font-size:13px;line-height:18px;color:#262626;transform:scaleX(0.9653);">Share</span>
<span class="t " style="left:1278px;top:40.5px;font-size:13px;line-height:18px;color:#262626;transform:scaleX(1.0500);">Comments</span>
<span class="t " style="left:12px;top:144.1px;font-size:12px;line-height:17px;color:#444444;transform:scaleX(0.9830);">Clipboard</span>
<span class="t " style="left:179px;top:144.1px;font-size:12px;line-height:17px;color:#444444;transform:scaleX(0.9869);">Font</span>
<span class="t " style="left:357.7px;top:144.1px;font-size:12px;line-height:17px;color:#444444;transform:scaleX(0.9874);">Alignment</span>
<span class="t " style="left:508px;top:144.1px;font-size:12px;line-height:17px;color:#444444;transform:scaleX(0.8548);">RMS</span>
<span class="t " style="left:604.6px;top:144.1px;font-size:12px;line-height:17px;color:#444444;transform:scaleX(0.9370);">Number</span>
<span class="t " style="left:786px;top:144.1px;font-size:12px;line-height:17px;color:#444444;transform:scaleX(0.8566);">Styles</span>
<span class="t " style="left:927.6px;top:144.1px;font-size:12px;line-height:17px;color:#444444;transform:scaleX(0.9148);">Cells</span>
<span class="t " style="left:1035px;top:144.1px;font-size:12px;line-height:17px;color:#444444;transform:scaleX(1.0081);">Editing</span>
<span class="t " style="left:1162.8px;top:144.1px;font-size:12px;line-height:17px;color:#444444;transform:scaleX(0.9477);">Webex</span>
<span class="t " style="left:16px;top:105.0px;font-size:12px;line-height:17px;color:#262626;transform:scaleX(0.8798);">Paste</span>
<span class="t " style="left:104.7px;top:79.8px;font-size:12px;line-height:17px;color:#262626;transform:scaleX(0.9496);">Calibri</span>
<span class="t " style="left:215.7px;top:79.8px;font-size:12px;line-height:17px;color:#262626;transform:scaleX(0.8742);">11</span>
<span class="t " style="left:108.3px;top:108.5px;font-size:14px;line-height:20px;color:#262626;font-weight:700;transform:scaleX(0.7605);">B</span>
<span class="t sf" style="left:131px;top:108.0px;font-size:15px;line-height:21px;color:#262626;font-weight:700;font-style:italic;transform:scaleX(1.0267);">I</span>
<span class="t " style="left:150.5px;top:109.0px;font-size:13px;line-height:18px;color:#262626;transform:scaleX(0.9052);">U</span>
<span class="t " style="left:505px;top:105.0px;font-size:12px;line-height:17px;color:#262626;transform:scaleX(0.9054);">Share</span>
<span class="t " style="left:490px;top:120.8px;font-size:12px;line-height:17px;color:#262626;transform:scaleX(0.9927);">Protected</span>
<span class="t " style="left:572px;top:79.8px;font-size:12px;line-height:17px;color:#262626;transform:scaleX(0.9133);">General</span>
<span class="t " style="left:574.7px;top:107.5px;font-size:16px;line-height:22px;color:#262626;transform:scaleX(0.9319);">$</span>
<span class="t " style="left:605px;top:107.5px;font-size:16px;line-height:22px;color:#262626;transform:scaleX(1.1240);">%</span>
<span class="t " style="left:720px;top:105.0px;font-size:12px;line-height:17px;color:#262626;transform:scaleX(1.0275);">Conditional</span>
<span class="t " style="left:717px;top:120.8px;font-size:12px;line-height:17px;color:#262626;transform:scaleX(1.0112);">Formatting</span>
<span class="t " style="left:789px;top:105.0px;font-size:12px;line-height:17px;color:#262626;transform:scaleX(0.9571);">Format as</span>
<span class="t " style="left:798.5px;top:120.8px;font-size:12px;line-height:17px;color:#262626;transform:scaleX(0.8889);">Table</span>
<span class="t " style="left:855.5px;top:105.0px;font-size:12px;line-height:17px;color:#262626;transform:scaleX(0.9336);">Cell</span>
<span class="t " style="left:846px;top:120.8px;font-size:12px;line-height:17px;color:#262626;transform:scaleX(0.8872);">Styles</span>
<span class="t " style="left:925.6px;top:70.5px;font-size:12px;line-height:17px;color:#262626;transform:scaleX(0.9462);">Insert</span>
<span class="t " style="left:925.6px;top:93.7px;font-size:12px;line-height:17px;color:#262626;transform:scaleX(0.9341);">Delete</span>
<span class="t " style="left:925.6px;top:116.7px;font-size:12px;line-height:17px;color:#262626;transform:scaleX(0.9838);">Format</span>
<span class="t " style="left:1033px;top:105.0px;font-size:12px;line-height:17px;color:#262626;transform:scaleX(1.0192);">Sort &amp;</span>
<span class="t " style="left:1033px;top:120.8px;font-size:12px;line-height:17px;color:#262626;transform:scaleX(0.9748);">Filter</span>
<span class="t " style="left:1075.7px;top:105.0px;font-size:12px;line-height:17px;color:#262626;transform:scaleX(1.0177);">Find &amp;</span>
<span class="t " style="left:1073px;top:120.8px;font-size:12px;line-height:17px;color:#262626;transform:scaleX(0.9293);">Select</span>
<span class="t " style="left:1133px;top:105.0px;font-size:12px;line-height:17px;color:#262626;transform:scaleX(0.9168);">Share This</span>
<span class="t " style="left:1147px;top:120.8px;font-size:12px;line-height:17px;color:#262626;transform:scaleX(0.9305);">File</span>
<span class="t " style="left:1192px;top:105.0px;font-size:12px;line-height:17px;color:#262626;transform:scaleX(0.9424);">Webex</span>
<span class="t " style="left:12.5px;top:175.5px;font-size:12px;line-height:17px;color:#4a4a4a;transform:scaleX(1.0428);">D9</span>
<span class="t " style="left:161.15px;top:208.5px;font-size:12px;line-height:17px;color:#e8e8e8;transform:scaleX(0.9606);">A</span>
<span class="t " style="left:459.55px;top:208.5px;font-size:12px;line-height:17px;color:#e8e8e8;transform:scaleX(0.8608);">B</span>
<span class="t " style="left:652.8px;top:208.5px;font-size:12px;line-height:17px;color:#e8e8e8;transform:scaleX(0.8533);">C</span>
<span class="t " style="left:846.3px;top:208.5px;font-size:12px;line-height:17px;color:#ffffff;transform:scaleX(0.9686);">D</span>
<span class="t " style="left:1039.45px;top:208.5px;font-size:12px;line-height:17px;color:#e8e8e8;transform:scaleX(0.7610);">E</span>
<span class="t " style="left:1103.55px;top:208.5px;font-size:12px;line-height:17px;color:#e8e8e8;transform:scaleX(0.8034);">F</span>
<span class="t " style="left:1166.4px;top:208.5px;font-size:12px;line-height:17px;color:#e8e8e8;transform:scaleX(0.8776);">G</span>
<span class="t " style="left:1230.25px;top:208.5px;font-size:12px;line-height:17px;color:#e8e8e8;transform:scaleX(0.9802);">H</span>
<span class="t " style="left:1297.0px;top:208.5px;font-size:12px;line-height:17px;color:#e8e8e8;transform:scaleX(0.8972);">I</span>
<span class="t rn" style="left:9.2px;top:229.5px;font-size:12px;line-height:17px;color:#e8e8e8;transform:scaleX(1.0168);">1</span>
<span class="t rn" style="left:9.2px;top:289.5px;font-size:12px;line-height:17px;color:#e8e8e8;transform:scaleX(1.0168);">2</span>
<span class="t rn" style="left:9.2px;top:349.5px;font-size:12px;line-height:17px;color:#e8e8e8;transform:scaleX(1.0168);">3</span>
<span class="t rn" style="left:9.2px;top:369.5px;font-size:12px;line-height:17px;color:#e8e8e8;transform:scaleX(1.0168);">4</span>
<span class="t rn" style="left:9.2px;top:409.5px;font-size:12px;line-height:17px;color:#e8e8e8;transform:scaleX(1.0168);">5</span>
<span class="t rn" style="left:9.2px;top:469.5px;font-size:12px;line-height:17px;color:#e8e8e8;transform:scaleX(1.0168);">6</span>
<span class="t rn" style="left:9.2px;top:489.5px;font-size:12px;line-height:17px;color:#e8e8e8;transform:scaleX(1.0168);">7</span>
<span class="t rn" style="left:9.2px;top:509.5px;font-size:12px;line-height:17px;color:#e8e8e8;transform:scaleX(1.0168);">8</span>
<span class="t rn" style="left:9.2px;top:529.5px;font-size:12px;line-height:17px;color:#ffffff;transform:scaleX(1.0168);">9</span>
<span class="t rn" style="left:6.8px;top:549.5px;font-size:12px;line-height:17px;color:#e8e8e8;transform:scaleX(0.8683);">10</span>
<span class="t rn" style="left:6.8px;top:569.5px;font-size:12px;line-height:17px;color:#e8e8e8;transform:scaleX(0.9303);">11</span>
<span class="t rn" style="left:6.8px;top:589.5px;font-size:12px;line-height:17px;color:#e8e8e8;transform:scaleX(0.8683);">12</span>
<span class="t rn" style="left:6.8px;top:609.5px;font-size:12px;line-height:17px;color:#e8e8e8;transform:scaleX(0.8683);">13</span>
<span class="t rn" style="left:6.8px;top:629.5px;font-size:12px;line-height:17px;color:#e8e8e8;transform:scaleX(0.8683);">14</span>
<span class="t rn" style="left:6.8px;top:649.5px;font-size:12px;line-height:17px;color:#e8e8e8;transform:scaleX(0.8683);">15</span>
<span class="t rn" style="left:6.8px;top:669.5px;font-size:12px;line-height:17px;color:#e8e8e8;transform:scaleX(0.8683);">16</span>
<span class="t " style="left:27.7px;top:229.0px;font-size:13px;line-height:18px;color:#000000;font-weight:700;transform:scaleX(0.9011);">Key</span>
<span class="t " style="left:305.7px;top:229.0px;font-size:13px;line-height:18px;color:#000000;font-weight:700;transform:scaleX(1.0451);">Value</span>
<span class="t " style="left:625.7px;top:229.0px;font-size:13px;line-height:18px;color:#000000;font-weight:700;transform:scaleX(1.0129);">Extention</span>
<span class="t " style="left:692.7px;top:229.0px;font-size:13px;line-height:18px;color:#000000;font-weight:700;transform:scaleX(0.9858);">Description</span>
<span class="t " style="left:27.7px;top:269.0px;font-size:13px;line-height:18px;color:#000000;transform:scaleX(1.0510);">ExcelRemoveDuplicateRowsMacroFilePath</span>
<span class="t " style="left:305.7px;top:249.0px;font-size:13px;line-height:18px;color:#000000;transform:scaleX(1.1057);">Automation Anywhere\My Docs\ExcelUtilities-</span>
<span class="t " style="left:305.7px;top:269.0px;font-size:13px;line-height:18px;color:#000000;transform:scaleX(1.0960);">Larsen&amp;ToubroInfotech(LTI)\Input</span>
<span class="t " style="left:305.7px;top:289.0px;font-size:13px;line-height:18px;color:#000000;transform:scaleX(1.0973);">Folder\DeDuplication.xlsm</span>
<span class="t " style="left:625.7px;top:269.0px;font-size:13px;line-height:18px;color:#000000;transform:scaleX(1.0667);">xlsm</span>
<span class="t " style="left:692.7px;top:249.0px;font-size:13px;line-height:18px;color:#000000;transform:scaleX(1.0487);">This is the Macro file path for  Excel Remove</span>
<span class="t " style="left:692.7px;top:269.0px;font-size:13px;line-height:18px;color:#000000;transform:scaleX(1.0694);">Duplicate Row Operation. This file contains path</span>
<span class="t " style="left:692.7px;top:289.0px;font-size:13px;line-height:18px;color:#000000;transform:scaleX(1.0860);">suffix only. The BOT will add the prefix.</span>
<span class="t " style="left:27.7px;top:329.0px;font-size:13px;line-height:18px;color:#000000;transform:scaleX(1.0644);">CreatePivotMacroFilePath</span>
<span class="t " style="left:305.7px;top:309.0px;font-size:13px;line-height:18px;color:#000000;transform:scaleX(1.1057);">Automation Anywhere\My Docs\ExcelUtilities-</span>
<span class="t " style="left:305.7px;top:329.0px;font-size:13px;line-height:18px;color:#000000;transform:scaleX(1.0960);">Larsen&amp;ToubroInfotech(LTI)\Input</span>
<span class="t " style="left:305.7px;top:349.0px;font-size:13px;line-height:18px;color:#000000;transform:scaleX(1.1247);">Folder\pivot.xlsm</span>
<span class="t " style="left:625.7px;top:329.0px;font-size:13px;line-height:18px;color:#000000;transform:scaleX(1.0667);">xlsm</span>
<span class="t " style="left:692.7px;top:309.0px;font-size:13px;line-height:18px;color:#000000;transform:scaleX(1.0680);">This is the macro file path for Create Pivot</span>
<span class="t " style="left:692.7px;top:329.0px;font-size:13px;line-height:18px;color:#000000;transform:scaleX(1.0764);">Operation. This parameter contains path suffix</span>
<span class="t " style="left:692.7px;top:349.0px;font-size:13px;line-height:18px;color:#000000;transform:scaleX(1.0756);">only. The BOT will add the path prefix.</span>
<span class="t " style="left:27.7px;top:369.0px;font-size:13px;line-height:18px;color:#000000;transform:scaleX(1.0633);">CreatePivotMacroName</span>
<span class="t " style="left:305.7px;top:369.0px;font-size:13px;line-height:18px;color:#000000;transform:scaleX(1.0786);">Pivot_Table</span>
<span class="t " style="left:625.7px;top:369.0px;font-size:13px;line-height:18px;color:#000000;transform:scaleX(1.0242);">NA</span>
<span class="t " style="left:692.7px;top:369.0px;font-size:13px;line-height:18px;color:#000000;transform:scaleX(1.0605);">This is MacroName for Create Pivot operation.</span>
<span class="t " style="left:27.7px;top:399.0px;font-size:13px;line-height:18px;color:#000000;transform:scaleX(1.0602);">CreatePivotMacroBookName</span>
<span class="t " style="left:305.7px;top:399.0px;font-size:13px;line-height:18px;color:#000000;transform:scaleX(1.0897);">Pivot</span>
<span class="t " style="left:625.7px;top:399.0px;font-size:13px;line-height:18px;color:#000000;transform:scaleX(1.0242);">NA</span>
<span class="t " style="left:692.7px;top:389.0px;font-size:13px;line-height:18px;color:#000000;transform:scaleX(1.0301);">This is Macro BOOK name for Create Pivot</span>
<span class="t " style="left:692.7px;top:409.0px;font-size:13px;line-height:18px;color:#000000;transform:scaleX(1.1240);">operation.</span>
<span class="t " style="left:27.7px;top:449.0px;font-size:13px;line-height:18px;color:#000000;transform:scaleX(1.0596);">ExcelCustomFilterScriptFilePath</span>
<span class="t " style="left:305.7px;top:429.0px;font-size:13px;line-height:18px;color:#000000;transform:scaleX(1.1069);">Automation Anywhere\My Scripts\ExcelUtilities-</span>
<span class="t " style="left:305.7px;top:449.0px;font-size:13px;line-height:18px;color:#000000;transform:scaleX(1.0866);">Larsen&amp;ToubroInfotech(LTI)\My Scripts\Filter</span>
<span class="t " style="left:305.7px;top:469.0px;font-size:13px;line-height:18px;color:#000000;transform:scaleX(1.1034);">single column with multiple conditions.vbs</span>
<span class="t " style="left:625.7px;top:449.0px;font-size:13px;line-height:18px;color:#000000;transform:scaleX(1.0378);">vbs</span>
<span class="t " style="left:692.7px;top:429.0px;font-size:13px;line-height:18px;color:#000000;transform:scaleX(1.0742);">This is the Script File for Custom filter operations.</span>
<span class="t " style="left:692.7px;top:449.0px;font-size:13px;line-height:18px;color:#000000;transform:scaleX(1.0579);">This parameter contains path suffix only. The BOT</span>
<span class="t " style="left:692.7px;top:469.0px;font-size:13px;line-height:18px;color:#000000;transform:scaleX(1.1093);">will add the path prefix.</span>
<span class="t " style="left:112.5px;top:682.5px;font-size:12px;line-height:17px;color:#1e6b41;font-weight:700;transform:scaleX(1.0615);">ExcelUtilityConfig</span>
<span class="t " style="left:1332.2px;top:708.3px;font-size:12px;line-height:17px;color:#333333;transform:scaleX(0.8338);">100%</span>
<span class="t " style="left:1257.4px;top:730.0px;font-size:12px;line-height:17px;color:#ffffff;transform:scaleX(0.9265);">12:33 PM</span>
</div>
</div>
</body></html>
